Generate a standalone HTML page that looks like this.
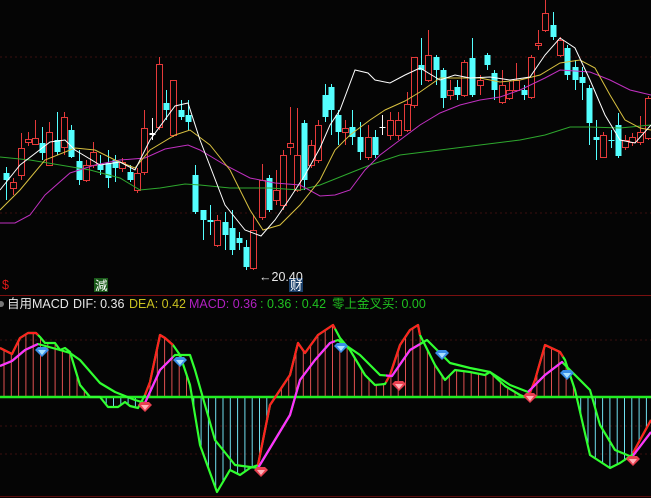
<!DOCTYPE html>
<html><head><meta charset="utf-8">
<style>
html,body{margin:0;padding:0;background:#050505;width:651px;height:498px;overflow:hidden}
svg{position:absolute;left:0;top:0}
.t{font-family:"Liberation Sans","Noto Sans CJK SC",sans-serif;font-size:12.5px}
</style></head><body>
<svg id="s" width="651" height="498" xmlns="http://www.w3.org/2000/svg">
<g stroke="#3a0f0f" stroke-dasharray="2,3" stroke-width="1">
<line x1="0" y1="57" x2="651" y2="57"/><line x1="0" y1="213" x2="651" y2="213"/>
<line x1="0" y1="340" x2="651" y2="340"/><line x1="0" y1="426" x2="651" y2="426"/>
<line x1="0" y1="454" x2="651" y2="454"/>
</g>
<line x1="0" y1="295.5" x2="651" y2="295.5" stroke="#7a1010" stroke-width="1"/>
<line x1="0" y1="496.5" x2="651" y2="496.5" stroke="#5a0c0c" stroke-width="1"/>
<g id="cand"></g>
<g id="ma" fill="none" stroke-width="1"></g>
<g id="hist"></g>
<line x1="0" y1="397" x2="651" y2="397" stroke="#22ee22" stroke-width="2.5"/>
<g id="mac" fill="none" stroke-width="2.2" stroke-linejoin="round"></g>
<g id="gems"></g>
<text x="2" y="289" class="t" fill="#e01818" font-size="12">$</text>
<rect x="94" y="278" width="14" height="14" fill="#1a5a1a"/>
<text x="95" y="290" class="t" fill="#ffffff" font-size="12">減</text>
<rect x="289" y="278" width="14" height="14" fill="#1a3f6a"/>
<text x="290" y="290" class="t" fill="#ffffff" font-size="12">财</text>
<text x="259" y="281" class="t" fill="#e8e8e8" font-size="12">←20.40</text>
<circle cx="1" cy="304" r="3" fill="#777"/>
<text y="308" class="t"><tspan x="7" fill="#e8e8e8">自用MACD</tspan><tspan x="73" fill="#e8e8e8">DIF: 0.36</tspan><tspan x="129" fill="#c8c020">DEA: 0.42</tspan><tspan x="189" fill="#b020c0">MACD: 0.36</tspan><tspan x="260" fill="#20c020">: 0.36 : 0.42</tspan><tspan x="332" fill="#20c020">零上金叉买: 0.00</tspan></text>
</svg>
<script>
var NS="http://www.w3.org/2000/svg";
function el(p,n,a){var e=document.createElementNS(NS,n);for(var k in a)e.setAttribute(k,a[k]);document.getElementById(p).appendChild(e);return e;}
var C=[[6,173,180,167,200,'c'],[13,182,188,178,195,'r'],[21,148,175,133,180,'r'],[28,139,142,132,146,'r'],[35,138,144,120,145,'r'],[42,143,153,127,160,'c'],[49,132,165,122,166,'r'],[57,140,152,112,155,'c'],[64,117,147,112,155,'r'],[71,130,157,125,158,'c'],[79,161,180,150,185,'c'],[86,165,180,160,182,'r'],[93,152,165,142,168,'r'],[100,165,170,155,175,'c'],[108,163,178,150,188,'c'],[115,160,168,155,182,'c'],[122,162,168,158,172,'r'],[130,172,180,165,182,'c'],[137,173,190,168,193,'r'],[144,128,172,110,175,'r'],[152,133,135,118,140,'w'],[159,64,127,57,130,'r'],[166,103,110,90,120,'c'],[173,80,135,83,137,'r'],[181,110,117,100,120,'c'],[188,115,122,100,130,'c'],[195,175,212,165,214,'c'],[203,210,220,210,240,'c'],[210,220,222,205,235,'c'],[217,220,245,215,247,'r'],[225,222,235,212,250,'c'],[232,228,250,210,255,'c'],[239,238,243,232,250,'c'],[246,247,267,240,270,'c'],[253,230,268,215,270,'r'],[262,180,217,164,220,'r'],[269,178,210,175,212,'c'],[276,190,200,170,205,'r'],[283,155,205,150,210,'r'],[290,143,147,107,155,'r'],[297,155,190,108,192,'r'],[304,123,180,120,190,'c'],[311,145,165,140,168,'r'],[318,125,160,120,163,'r'],[325,95,117,84,122,'c'],[331,87,110,84,135,'c'],[338,115,132,110,145,'c'],[345,128,132,120,145,'r'],[352,127,137,110,145,'c'],[360,137,152,122,160,'c'],[368,137,157,125,160,'r'],[375,137,155,130,158,'c'],[382,127,128,115,135,'w'],[390,120,135,112,140,'r'],[398,120,135,112,140,'r'],[407,104,130,92,132,'r'],[414,57,105,57,108,'r'],[421,65,70,38,85,'c'],[428,55,80,30,82,'r'],[436,57,70,55,85,'c'],[443,70,98,68,108,'c'],[450,90,95,80,100,'r'],[457,87,95,80,100,'c'],[464,62,95,60,97,'r'],[472,58,95,38,97,'c'],[480,80,85,75,95,'r'],[487,55,65,53,70,'c'],[494,73,90,70,100,'c'],[502,85,102,70,104,'r'],[509,90,98,82,100,'r'],[516,80,90,63,92,'r'],[524,90,95,85,100,'c'],[531,57,97,55,99,'r'],[538,43,45,30,50,'r'],[545,13,30,0,32,'r'],[553,25,37,12,40,'c'],[560,40,55,37,57,'r'],[567,48,75,45,80,'c'],[575,67,80,60,90,'c'],[582,77,83,67,100,'c'],[589,88,123,85,145,'c'],[596,137,140,120,160,'c'],[603,135,157,132,158,'r'],[611,140,141,130,148,'c'],[618,125,156,113,158,'c'],[625,140,147,135,150,'r'],[632,137,142,133,146,'r'],[640,132,142,116,145,'r'],[648,98,138,96,140,'r']];
C.forEach(function(c){var col=c[5]=='r'?'#e53a3a':(c[5]=='c'?'#54ffff':'#ffffff');
el('cand','line',{x1:c[0]+.5,x2:c[0]+.5,y1:c[3],y2:c[4],stroke:col});
if(c[5]=='r')el('cand','rect',{x:c[0]-2.5,y:c[1]+.5,width:6,height:Math.max(1,c[2]-c[1]),fill:'#050505',stroke:col});
else el('cand','rect',{x:c[0]-2.5,y:c[1],width:6,height:Math.max(1,c[2]-c[1]),fill:col});});
function pl(g,pts,col,w){el(g,'polyline',{points:pts,stroke:col,'stroke-width':w||1,fill:'none'});}
pl('ma',"0,157 30,160 60,165 90,170 120,178 140,190 160,188 185,184 200,185 230,188 270,188 300,190 320,185 345,175 370,165 400,155 440,150 480,145 520,140 545,135 570,127 590,127 620,128 651,125","#2ea82e");
pl('ma',"0,223 15,223 30,215 45,195 70,173 95,165 120,160 145,158 165,149 188,145 200,150 225,165 250,178 275,183 300,185 320,196 335,195 350,190 365,170 380,155 400,140 420,125 440,113 460,105 480,100 500,97 520,90 545,78 560,70 575,71 590,72 610,80 630,90 651,95","#c030c0");
pl('ma',"0,210 20,190 45,160 75,148 95,150 115,160 135,168 150,150 175,135 190,130 210,145 230,170 250,210 263,230 280,225 300,205 320,180 335,150 350,135 370,120 385,110 405,101 420,92 440,78 460,78 480,78 500,82 520,80 540,75 560,63 580,60 595,68 610,95 625,120 640,128 651,130","#d8c040");
pl('ma',"0,190 20,165 50,142 65,140 75,150 100,165 120,162 135,170 150,140 175,106 188,103 200,140 225,205 245,230 261,236 275,220 290,198 305,175 320,148 330,125 340,110 355,70 368,73 375,80 390,83 405,75 420,68 430,74 440,80 455,75 470,78 490,77 510,80 530,77 545,55 560,38 575,48 590,80 605,115 620,140 635,143 651,125","#ffffff");
var DIF=[[0,348],[12,354],[20,338],[28,333],[36,333],[40,337],[45,343],[55,343],[60,350],[65,348],[70,352],[80,385],[90,397],[100,397],[108,407],[118,407],[125,402],[130,406],[138,408],[145,395],[150,382],[160,335],[165,338],[173,345],[180,355],[190,385],[200,445],[217,492],[230,470],[240,475],[250,468],[258,465],[265,430],[270,405],[280,390],[290,375],[298,343],[305,353],[318,335],[333,325],[340,338],[350,350],[365,375],[375,385],[385,384],[390,375],[400,345],[410,330],[418,325],[420,335],[435,365],[445,380],[455,370],[470,372],[485,375],[490,372],[505,386],[520,395],[528,398],[535,380],[545,345],[560,352],[565,360],[575,390],[590,455],[610,468],[620,463],[632,455],[640,440],[651,420]];
function ip(a,x){for(var i=1;i<a.length;i++)if(a[i][0]>=x){var p=a[i-1],q=a[i];return p[1]+(q[1]-p[1])*(x-p[0])/((q[0]-p[0])||1);}return a[a.length-1][1];}
for(var x=4;x<651;x+=7.3){var y=ip(DIF,x);if(Math.abs(y-397)<2)continue;el('hist','line',{x1:x.toFixed(1),x2:x.toFixed(1),y1:397,y2:y.toFixed(1),stroke:y<397?'#e05050':'#70e0f0','stroke-width':1});}
function seg(a,from,to,col){var pts=[[from,ip(a,from)]];a.forEach(function(q){if(q[0]>from&&q[0]<to)pts.push(q);});pts.push([to,ip(a,to)]);pl('mac',pts.map(function(q){return q[0]+','+q[1].toFixed(1)}).join(' '),col,2.2);}
var DEA=[[0,366],[12,361],[25,350],[38,344],[60,350],[70,353],[80,360],[100,383],[115,392],[135,400],[145,403],[160,370],[175,355],[190,355],[195,370],[205,405],[215,440],[235,465],[258,468],[290,415],[300,380],[315,360],[330,343],[338,340],[360,355],[380,375],[392,376],[410,350],[427,340],[450,363],[470,368],[490,372],[510,385],[528,392],[545,375],[562,362],[590,390],[600,425],[615,450],[632,457],[651,432]];
seg(DIF,0,651,'#30ff30');seg(DEA,0,651,'#30ff30');
var R=[[0,38],[145,173],[258,335],[386,420],[528,563],[633,651]];
R.forEach(function(r){seg(DIF,r[0],r[1],'#ff2020');seg(DEA,r[0],r[1],'#ff30ff');});
function gem(x,y,blue){var c1=blue?'#3a8ee8':'#e84050',c2=blue?'#a8e0ff':'#ffb0b8';
el('gems','polygon',{points:(x-7)+','+(y-2)+' '+(x-4)+','+(y-5)+' '+(x+4)+','+(y-5)+' '+(x+7)+','+(y-2)+' '+x+','+(y+5),fill:c1});
el('gems','polygon',{points:(x-4)+','+(y-2)+' '+(x+4)+','+(y-2)+' '+x+','+(y+3),fill:c2});}
[[42,352],[180,362],[341,348],[442,355],[567,375]].forEach(function(g){gem(g[0],g[1],1)});
[[145,407],[261,472],[399,386],[530,398],[633,461]].forEach(function(g){gem(g[0],g[1],0)});
</script>
</body></html>
